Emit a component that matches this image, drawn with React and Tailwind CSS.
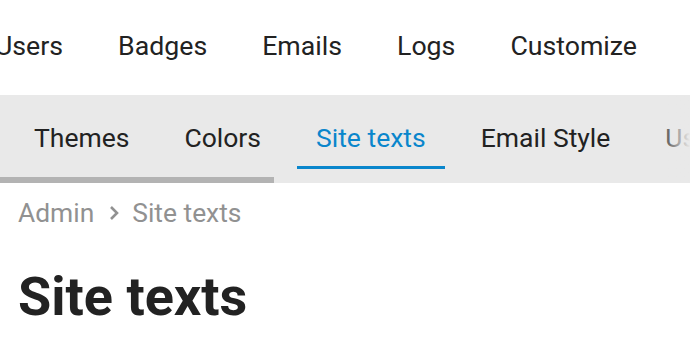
import React from 'react';

const topLinks = ['Users', 'Badges', 'Emails', 'Logs', 'Customize'];
const subLinks = ['Themes', 'Colors', 'Site texts', 'Email Style', 'User Fields'];

const App = () => {
  return (
    <div
      className="w-[690px] h-[359px] overflow-hidden bg-white text-[#222]"
      style={{ fontFamily: 'Roboto, "Liberation Sans", sans-serif' }}
    >
      {/* main admin nav, scrolled a bit to the right */}
      <div className="h-[95px] overflow-hidden pt-[30px]">
        <ul className="flex gap-[17px] ml-[-24px] whitespace-nowrap text-[26.7px] leading-[32px]">
          {topLinks.map((link) => (
            <li key={link} className="px-[19px]">
              {link}
            </li>
          ))}
        </ul>
      </div>

      {/* customize sub nav */}
      <div className="relative h-[88px] bg-[#e9e9e9] overflow-hidden">
        <ul className="flex gap-[17px] pl-[15px] whitespace-nowrap text-[26.5px] leading-[32px]">
          {subLinks.map((link) => {
            const active = link === 'Site texts';
            return (
              <li
                key={link}
                className={
                  active
                    ? 'px-[19px] pt-[27px] pb-[12px] border-b-[3px] border-[#0a86cc] text-[#0a86cc]'
                    : 'px-[19px] pt-[27px] pb-[12px] border-b-[3px] border-transparent'
                }
              >
                {link}
              </li>
            );
          })}
        </ul>
        <div className="mt-[8px] h-[6px] w-[274px] bg-[#b3b3b3]"></div>
        <div className="absolute top-0 right-0 h-full w-[34px] bg-gradient-to-r from-transparent to-[#e9e9e9]"></div>
      </div>

      {/* breadcrumb */}
      <div className="flex items-center pl-[18px] pt-[14px] text-[26.4px] leading-[32px] text-[#919191]">
        <span>Admin</span>
        <svg width="12" height="16" viewBox="0 0 12 16" className="ml-[14px] mr-[12px]">
          <path d="M3 2l6 6-6 6" fill="none" stroke="#919191" strokeWidth="2.6" />
        </svg>
        <span>Site texts</span>
      </div>

      <h1 className="mt-[38px] pl-[18px] text-[54px] font-bold leading-[60px] text-[#222]">
        Site texts
      </h1>
    </div>
  );
};

export default App;
